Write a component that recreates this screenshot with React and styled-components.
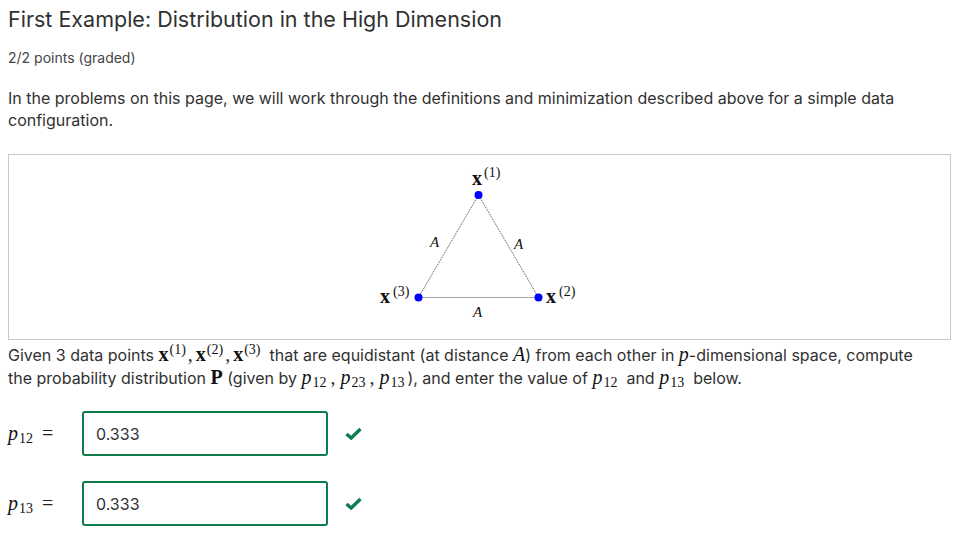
import styled, { createGlobalStyle } from 'styled-components';

const GlobalStyle = createGlobalStyle`
  body {
    margin: 0;
    background: #ffffff;
    font-family: Inter, 'Open Sans', sans-serif;
    color: #313131;
  }
`;

const Page = styled.div`
  padding: 5px 16px 0 8px;
`;

const Title = styled.h2`
  margin: 0;
  font-size: 21.5px;
  font-weight: 400;
  line-height: 28px;
  color: #313131;
`;

const Points = styled.div`
  margin-top: 16px;
  font-size: 14px;
  line-height: 17px;
  color: #454545;
`;

const Para = styled.p`
  margin: 21px 0 0;
  font-size: 16px;
  line-height: 22px;
  color: #313131;
`;

const FigureBox = styled.div`
  margin-top: 23px;
  height: 184px;
  border: 1px solid #c8c8c8;
  display: flex;
  justify-content: center;
`;

const Bold = styled.span`
  font-family: 'Liberation Serif', 'DejaVu Serif', serif;
  font-weight: 700;
  font-size: 20px;
  line-height: 0;
  color: #111;
`;

const Ital = styled.span`
  font-family: 'Liberation Serif', 'DejaVu Serif', serif;
  font-style: italic;
  font-size: 20px;
  line-height: 0;
  color: #111;
`;

const Sup = styled.span`
  font-family: 'Liberation Serif', 'DejaVu Serif', serif;
  font-weight: 400;
  font-size: 14px;
  position: relative;
  top: -7px;
  margin-left: 1px;
`;

const Sub = styled.span`
  font-family: 'Liberation Serif', 'DejaVu Serif', serif;
  font-style: normal;
  font-size: 14px;
  position: relative;
  top: 3px;
  margin-left: 1px;
`;

const Comma = styled.span`
  font-family: 'Liberation Serif', 'DejaVu Serif', serif;
  font-size: 20px;
  line-height: 0;
  margin: ${props => (props.$wide ? '0 5px 0 4px' : '0 3px 0 2px')};
`;

const Question = styled.p`
  margin: 4px 0 0;
  font-size: 16px;
  line-height: 23px;
  color: #313131;
`;

const Rows = styled.div`
  margin-top: 21px;
  display: flex;
  flex-direction: column;
  gap: 25px;
`;

const Row = styled.div`
  display: flex;
  align-items: center;
`;

const Label = styled.div`
  width: 74px;
  font-size: 20px;
  font-family: 'Liberation Serif', 'DejaVu Serif', serif;
  color: #222;
`;

const Eq = styled.span`
  margin-left: 9px;
`;

const Field = styled.div`
  width: 246px;
  height: 45px;
  box-sizing: border-box;
  border: 2px solid #0d7d4d;
  border-radius: 3px;
  display: flex;
  align-items: center;
  padding-left: 12px;
  font-size: 16px;
  color: #313131;
`;

const Check = styled.svg`
  margin-left: 17px;
  width: 17px;
  height: 13px;
`;

const P = ({ n }) => (
  <Ital>
    p<Sub>{n}</Sub>
  </Ital>
);

const X = ({ n }) => (
  <Bold>
    x<Sup>({n})</Sup>
  </Bold>
);

const Figure = () => (
  <svg width="220" height="184" viewBox="0 0 220 184">
    <g stroke="#444" strokeWidth="1" strokeDasharray="1 1" fill="none">
      <line x1="108.5" y1="40" x2="48.5" y2="142.5" />
      <line x1="108.5" y1="40" x2="168.5" y2="142.5" />
      <line x1="48.5" y1="142.5" x2="168.5" y2="142.5" />
    </g>
    <g fill="#0000ff">
      <circle cx="108.5" cy="40" r="4" />
      <circle cx="48.5" cy="142.5" r="4" />
      <circle cx="168.5" cy="142.5" r="4" />
    </g>
    <g fontFamily="'Liberation Serif', 'DejaVu Serif', serif" fill="#111">
      <text x="102" y="30" fontSize="20" fontWeight="700">x</text>
      <text x="114" y="22" fontSize="14">(1)</text>
      <text x="10" y="148" fontSize="20" fontWeight="700">x</text>
      <text x="23" y="141" fontSize="14">(3)</text>
      <text x="176" y="148" fontSize="20" fontWeight="700">x</text>
      <text x="189" y="141" fontSize="14">(2)</text>
      <g fontStyle="italic" fontSize="15">
        <text x="60" y="92">A</text>
        <text x="144" y="94">A</text>
        <text x="103" y="162">A</text>
      </g>
    </g>
  </svg>
);

const CheckMark = () => (
  <Check viewBox="0 0 17 13">
    <path d="M1.5 7 L6.2 11 L15.5 2" stroke="#0d7d4d" strokeWidth="3.4" fill="none" />
  </Check>
);

const answers = [
  { n: '12', value: '0.333' },
  { n: '13', value: '0.333' },
];

export default function App() {
  return (
    <Page>
      <GlobalStyle />
      <Title>First Example: Distribution in the High Dimension</Title>
      <Points>2/2 points (graded)</Points>
      <Para>
        In the problems on this page, we will work through the definitions and minimization
        described above for a simple data configuration.
      </Para>
      <FigureBox>
        <Figure />
      </FigureBox>
      <Question>
        Given 3 data points <X n="1" />
        <Comma>,</Comma>
        <X n="2" />
        <Comma>,</Comma>
        <X n="3" />
        &nbsp; that are equidistant (at distance <Ital>A</Ital>) from each other in{' '}
        <Ital>p</Ital>-dimensional space, compute
        <br />
        the probability distribution <Bold>P</Bold> (given by <P n="12" />
        <Comma $wide>,</Comma>
        <P n="23" />
        <Comma $wide>,</Comma>
        <P n="13" />
        &thinsp;), and enter the value of <P n="12" />
        &nbsp; and <P n="13" />
        &nbsp; below.
      </Question>
      <Rows>
        {answers.map(a => (
          <Row key={a.n}>
            <Label>
              <P n={a.n} />
              <Eq>=</Eq>
            </Label>
            <Field>{a.value}</Field>
            <CheckMark />
          </Row>
        ))}
      </Rows>
    </Page>
  );
}
